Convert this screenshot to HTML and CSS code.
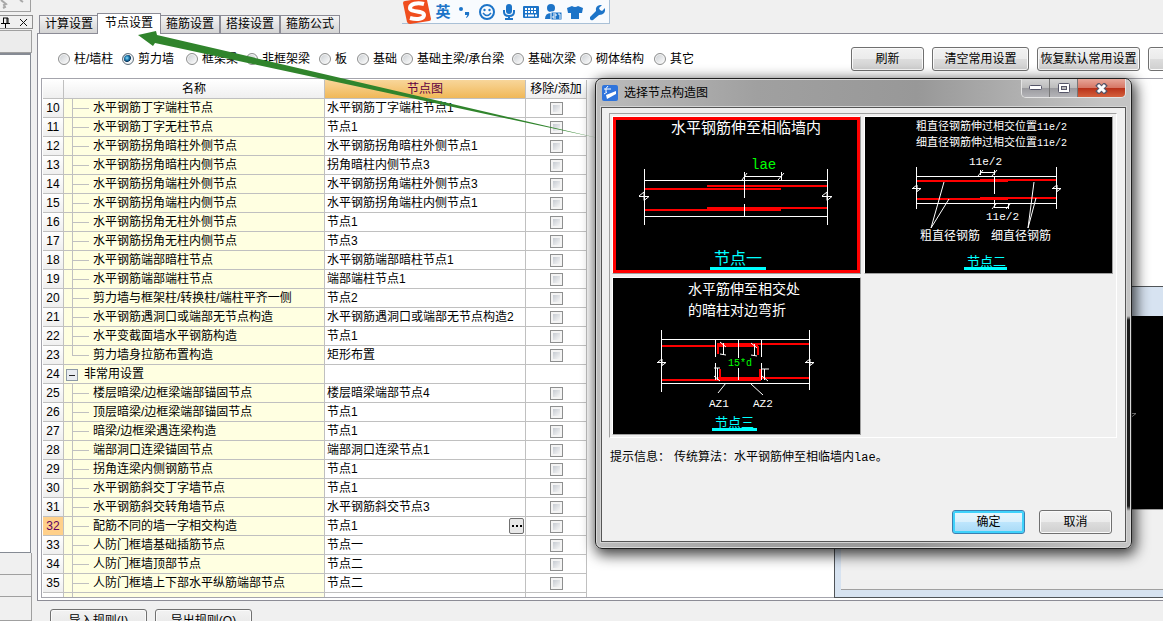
FILE: index.html
```html
<!DOCTYPE html>
<html lang="zh-CN">
<head>
<meta charset="utf-8">
<title>节点设置</title>
<link rel="stylesheet" href="styles.css">
</head>
<body>
<div class="app">
  <aside class="dock">
    <div class="dock-tools">
      <svg width="31" height="12" viewBox="0 0 31 12"><path d="M1 0l5 4-2 1 1 2-2 1M20 0l3 2" stroke="#a8a8a8" stroke-width="2" fill="none"/></svg>
    </div>
    <div class="dock-title">
      <button class="dock-btn" aria-label="固定"><svg width="9" height="11" viewBox="0 0 9 11"><path d="M2 1h5M2.500 1v5M6 1v5M7 1v5M0 6.500h9M4.500 7v4" stroke="#000" fill="none"/></svg></button>
      <button class="dock-btn" aria-label="关闭"><svg width="9" height="9" viewBox="0 0 9 9"><path d="M1 1l7 7M8 1L1 8" stroke="#111" fill="none"/></svg></button>
    </div>
    <div class="dock-head"></div>
    <div class="dock-tree"></div>
    <div class="dock-row"></div>
    <div class="dock-row"></div>
    <div class="dock-row"></div>
  </aside>

  <main class="main">
    <nav class="tabs" role="tablist">
      <button class="tab" role="tab">计算设置</button>
      <button class="tab tab-active" role="tab" aria-selected="true">节点设置</button>
      <button class="tab" role="tab">箍筋设置</button>
      <button class="tab" role="tab">搭接设置</button>
      <button class="tab" role="tab">箍筋公式</button>
    </nav>

    <section class="panel">
      <div class="filter">
        <div class="kinds">
          <label class="kind"><input type="radio" name="kind">柱/墙柱</label>
          <label class="kind"><input type="radio" name="kind" checked>剪力墙</label>
          <label class="kind"><input type="radio" name="kind">框架梁</label>
          <label class="kind"><input type="radio" name="kind">非框架梁</label>
          <label class="kind"><input type="radio" name="kind">板</label>
          <label class="kind"><input type="radio" name="kind">基础</label>
          <label class="kind"><input type="radio" name="kind">基础主梁/承台梁</label>
          <label class="kind"><input type="radio" name="kind">基础次梁</label>
          <label class="kind"><input type="radio" name="kind">砌体结构</label>
          <label class="kind"><input type="radio" name="kind">其它</label>
        </div>
        <div class="actions">
          <button class="btn btn-s">刷新</button>
          <button class="btn btn-m">清空常用设置</button>
          <button class="btn btn-l">恢复默认常用设置</button>
          <button class="btn btn-m" aria-label="更多"></button>
        </div>
      </div>

      <div class="sheet">
        <table class="grid">
          <colgroup><col class="c-no"><col class="c-name"><col class="c-node"><col class="c-tick"></colgroup>
          <thead><tr><th></th><th>名称</th><th class="current">节点图</th><th>移除/添加</th></tr></thead>
          <tbody>
            <tr><th>10</th><td class="name">水平钢筋丁字端柱节点</td><td>水平钢筋丁字端柱节点1</td><td class="tick"><input type="checkbox" aria-label="10"></td></tr>
            <tr><th>11</th><td class="name">水平钢筋丁字无柱节点</td><td>节点1</td><td class="tick"><input type="checkbox" aria-label="11"></td></tr>
            <tr><th>12</th><td class="name">水平钢筋拐角暗柱外侧节点</td><td>水平钢筋拐角暗柱外侧节点1</td><td class="tick"><input type="checkbox" aria-label="12"></td></tr>
            <tr><th>13</th><td class="name">水平钢筋拐角暗柱内侧节点</td><td>拐角暗柱内侧节点3</td><td class="tick"><input type="checkbox" aria-label="13"></td></tr>
            <tr><th>14</th><td class="name">水平钢筋拐角端柱外侧节点</td><td>水平钢筋拐角端柱外侧节点3</td><td class="tick"><input type="checkbox" aria-label="14"></td></tr>
            <tr><th>15</th><td class="name">水平钢筋拐角端柱内侧节点</td><td>水平钢筋拐角端柱内侧节点1</td><td class="tick"><input type="checkbox" aria-label="15"></td></tr>
            <tr><th>16</th><td class="name">水平钢筋拐角无柱外侧节点</td><td>节点1</td><td class="tick"><input type="checkbox" aria-label="16"></td></tr>
            <tr><th>17</th><td class="name">水平钢筋拐角无柱内侧节点</td><td>节点3</td><td class="tick"><input type="checkbox" aria-label="17"></td></tr>
            <tr><th>18</th><td class="name">水平钢筋端部暗柱节点</td><td>水平钢筋端部暗柱节点1</td><td class="tick"><input type="checkbox" aria-label="18"></td></tr>
            <tr><th>19</th><td class="name">水平钢筋端部端柱节点</td><td>端部端柱节点1</td><td class="tick"><input type="checkbox" aria-label="19"></td></tr>
            <tr><th>20</th><td class="name">剪力墙与框架柱/转换柱/端柱平齐一侧</td><td>节点2</td><td class="tick"><input type="checkbox" aria-label="20"></td></tr>
            <tr><th>21</th><td class="name">水平钢筋遇洞口或端部无节点构造</td><td>水平钢筋遇洞口或端部无节点构造2</td><td class="tick"><input type="checkbox" aria-label="21"></td></tr>
            <tr><th>22</th><td class="name">水平变截面墙水平钢筋构造</td><td>节点1</td><td class="tick"><input type="checkbox" aria-label="22"></td></tr>
            <tr><th>23</th><td class="name name-last">剪力墙身拉筋布置构造</td><td>矩形布置</td><td class="tick"><input type="checkbox" aria-label="23"></td></tr>
            <tr><th>24</th><td class="group"><button class="fold" aria-label="折叠"></button>非常用设置</td><td></td><td></td></tr>
            <tr><th>25</th><td class="name">楼层暗梁/边框梁端部锚固节点</td><td>楼层暗梁端部节点4</td><td class="tick"><input type="checkbox" aria-label="25"></td></tr>
            <tr><th>26</th><td class="name">顶层暗梁/边框梁端部锚固节点</td><td>节点1</td><td class="tick"><input type="checkbox" aria-label="26"></td></tr>
            <tr><th>27</th><td class="name">暗梁/边框梁遇连梁构造</td><td>节点1</td><td class="tick"><input type="checkbox" aria-label="27"></td></tr>
            <tr><th>28</th><td class="name">端部洞口连梁锚固节点</td><td>端部洞口连梁节点1</td><td class="tick"><input type="checkbox" aria-label="28"></td></tr>
            <tr><th>29</th><td class="name">拐角连梁内侧钢筋节点</td><td>节点1</td><td class="tick"><input type="checkbox" aria-label="29"></td></tr>
            <tr><th>30</th><td class="name">水平钢筋斜交丁字墙节点</td><td>节点1</td><td class="tick"><input type="checkbox" aria-label="30"></td></tr>
            <tr><th>31</th><td class="name">水平钢筋斜交转角墙节点</td><td>水平钢筋斜交节点3</td><td class="tick"><input type="checkbox" aria-label="31"></td></tr>
            <tr><th class="current">32</th><td class="name">配筋不同的墙一字相交构造</td><td><div class="picker">节点1<button class="more" aria-label="选择节点图"><svg width="10" height="2" viewBox="0 0 10 2"><path d="M0 0h2v2H0zM4 0h2v2H4zM8 0h2v2H8z"/></svg></button></div></td><td class="tick"><input type="checkbox" aria-label="32"></td></tr>
            <tr><th>33</th><td class="name">人防门框墙基础插筋节点</td><td>节点一</td><td class="tick"><input type="checkbox" aria-label="33"></td></tr>
            <tr><th>34</th><td class="name">人防门框墙顶部节点</td><td>节点二</td><td class="tick"><input type="checkbox" aria-label="34"></td></tr>
            <tr><th>35</th><td class="name">人防门框墙上下部水平纵筋端部节点</td><td>节点二</td><td class="tick"><input type="checkbox" aria-label="35"></td></tr>
            <tr><th></th><td class="name"></td><td></td><td></td></tr>
          </tbody>
        </table>
      </div>
    </section>

    <footer class="bottom">
      <button class="btn btn-m">导入规则(<u>I</u>)</button>
      <button class="btn btn-m">导出规则(<u>O</u>)</button>
    </footer>
  </main>
</div>

<!-- Input method bar -->
<div class="ime">
  <svg class="ime-logo" width="30" height="26" viewBox="0 0 30 26"><path d="M1 3Q1 1 3 1L22-2Q24-2 25 0L29 19Q29 21 27 21L8 24Q6 24 5 22Z" fill="#f04e1e"/><path d="M22 4C15 2 8 4 8 8c0 5 14 2 14 7 0 4-7 5-14 3" stroke="#fff" stroke-width="4" fill="none"/></svg>
  <button class="ime-btn">英</button>
  <button class="ime-btn" aria-label="标点"><svg width="18" height="18" viewBox="0 0 18 18"><circle cx="5" cy="6" r="2"/><path d="M9 9h4q1 4-3 6v-1q2-1 1-2H9z"/></svg></button>
  <button class="ime-btn" aria-label="表情"><svg width="18" height="18" viewBox="0 0 18 18"><circle cx="9" cy="9" r="7" fill="none" stroke="#1c74c8" stroke-width="2"/><circle cx="6.500" cy="7" r="1.200"/><circle cx="11.500" cy="7" r="1.200"/><path d="M5 10q4 5 8 0" fill="none" stroke="#1c74c8" stroke-width="1.500"/></svg></button>
  <button class="ime-btn" aria-label="语音"><svg width="18" height="18" viewBox="0 0 18 18"><rect x="6" y="1" width="6" height="10" rx="3"/><path d="M4 7v2q0 4 5 4t5-4V7M9 13v3M5 16h8" fill="none" stroke="#1c74c8" stroke-width="2"/></svg></button>
  <button class="ime-btn" aria-label="键盘"><svg width="18" height="18" viewBox="0 0 18 18"><rect x="1" y="3" width="16" height="12" rx="1"/><path d="M3 6h12M3 9h12" stroke="#fff" stroke-width="2" stroke-dasharray="2 1"/><path d="M3 12.500h2M6 12.500h6M13 12.500h2" stroke="#fff" stroke-width="2"/></svg></button>
  <button class="ime-btn" aria-label="账户"><svg width="20" height="18" viewBox="0 0 20 18"><circle cx="8" cy="5" r="4"/><path d="M2 16q0-6 6-6t7 6z"/><rect x="8" y="9" width="11" height="8" fill="#1c74c8" stroke="#fff"/><path d="M10 11h3v2h-3v2h3M15 11h2v5" fill="none" stroke="#fff"/></svg></button>
  <button class="ime-btn" aria-label="皮肤"><svg width="18" height="18" viewBox="0 0 18 18"><path d="M6 3q3 2 6 0l5 2-1 5h-3v6H5v-6H2L1 5z"/></svg></button>
  <button class="ime-btn" aria-label="工具"><svg width="18" height="18" viewBox="0 0 18 18"><path d="M2 14l6-6q-1-5 4-6l2 0-3 3 1 2 2 1 3-3q1 7-6 7l-6 5q-2 1-3-1z"/></svg></button>
</div>

<!-- Preview window behind the dialog -->
<section class="preview">
  <div class="preview-canvas"><svg width="6" height="5" viewBox="0 0 6 5"><path d="M0 .5h5L0 4.500" fill="none" stroke="#bbb"/></svg></div>
</section>

<svg class="pointer" width="600" height="140" viewBox="0 0 600 140"><path d="M138 35L156 31 157 35 598 138 155 43 153 46Z" fill="#30842c"/></svg>

<section class="dialog" role="dialog" aria-labelledby="dialog-title">
  <header class="caption">
    <svg width="16" height="16" viewBox="0 0 16 16"><rect width="16" height="16" rx="2" fill="#2f74dc"/><path d="M2 4h7M6 1q-3 2-2 6M2 9l3-2" stroke="#fff" fill="none"/><path d="M4 10l10-4v3L5 14z" fill="#fff"/></svg>
    <h1 class="caption-text" id="dialog-title">选择节点构造图</h1>
    <div class="winbtns">
      <button class="winbtn" aria-label="最小化"><svg width="13" height="6" viewBox="0 0 13 6"><rect x=".5" y=".5" width="12" height="4" rx="1" fill="#fff" stroke="#555568"/></svg></button>
      <button class="winbtn" aria-label="最大化"><svg width="12" height="10" viewBox="0 0 12 10"><rect x=".5" y=".5" width="11" height="9" rx="1" fill="#fff" stroke="#555568"/><rect x="3.500" y="3.500" width="5" height="3" fill="#bbb" stroke="#555568"/></svg></button>
      <button class="winbtn winbtn-close" aria-label="关闭"><svg width="13" height="11" viewBox="0 0 13 11"><path d="M2 1l9 9M11 1l-9 9" stroke="#555568" stroke-width="5"/><path d="M3 2l7 7M10 2L3 9" stroke="#fff" stroke-width="3"/></svg></button>
    </div>
  </header>
  <div class="dialog-body">
    <div class="cards">
      <button class="card" aria-label="节点一">
        <svg width="247" height="156" viewBox="0 0 247 156">
          <rect width="247" height="156" fill="#000"/>
          <rect x="1.500" y="1.500" width="244" height="153" fill="none" stroke="#f00" stroke-width="3"/>
          <text class="t15" x="58" y="16">水平钢筋伸至相临墙内</text>
          <text class="m14 green" x="138" y="52">lae</text>
          <path class="bar" d="M94 69H214M31 72H168M94 91H214M31 93H168"/>
          <path class="ln" d="M31.500 52V108M214.500 52V108M31 63.500H214M31 99.500H214M131.500 63V81M131.500 87V99M131 59.500H168M131.500 55V63M168.500 55V63M129 63l5-7M165 63l6-7M26 79.500H36l-5 4V75l-5 4M209 79.500H219l-5 4V75l-5 4"/>
          <text class="t16 cyan" x="101" y="147">节点一</text>
          <rect x="97" y="150" width="56" height="3" fill="#0ff"/>
        </svg>
      </button>
      <button class="card" aria-label="节点二">
        <svg width="247" height="156" viewBox="0 0 247 156">
          <rect width="247" height="156" fill="#000"/>
          <text class="t11" x="51" y="13">粗直径钢筋伸过相交位置<tspan class="m10">11e/2</tspan></text>
          <text class="t11" x="51" y="29">细直径钢筋伸过相交位置<tspan class="m10">11e/2</tspan></text>
          <text class="m11" x="104" y="48">11e/2</text>
          <path class="bar" d="M115 63H191M51 64H143M115 81H191M51 82H143"/>
          <path class="ln" d="M51.500 50V92M191.500 50V92M51 59.500H191M51 86.500H191M129.500 59V77M129.500 83V91M115 55.500H129M115.500 53V58M129.500 53V58M113 59l5-6M127 59l5-6M129 90.500H143M143.500 87V92M127 92l4-5M141 92l4-5M47 71.500H56l-4 3V68l-4 3M187 71.500H196l-4 3V68l-4 3M79 65L66 111 84 82M169 65L163 111 171 81"/>
          <text class="m11" x="121" y="103">11e/2</text>
          <text class="t12" x="55" y="123">粗直径钢筋</text>
          <text class="t12" x="126" y="123">细直径钢筋</text>
          <text class="t13 cyan" x="102" y="149">节点二</text>
          <rect x="99" y="150" width="43" height="3" fill="#0ff"/>
        </svg>
      </button>
      <button class="card" aria-label="节点三">
        <svg width="247" height="156" viewBox="0 0 247 156">
          <rect width="247" height="156" fill="#000"/>
          <text class="t14" x="75" y="16">水平筋伸至相交处</text>
          <text class="t14" x="75" y="37">的暗柱对边弯折</text>
          <path class="bar" d="M48 68H103M145 66H196M48 102H105M147 100H196M105 68V76M145 68V77M107 91V101M147 91V101"/>
          <path class="bar thick" d="M104 67H145M105 101H148"/>
          <path class="ln" d="M48.500 52V114M196.500 52V112M48 61.500H196M48 105.500H196M102.500 61V79M102.500 85V102M148.500 61V79M148.500 85V102M125.500 61V80M125.500 90V102M44 84.500H53l-4 3V81l-4 3M192 84.500H201l-4 3V81l-4 3M110.500 65V77M107 64l6 5M107 76l6 1M141.500 66V78M138 65l6 5M138 77l6 1M104.500 90V102M101 90h6M101 98l6 5M151.500 91V102M148 91h8M149 98l6 5M113 105L105 115M138 106L150 117"/>
          <text class="m10 green" x="115" y="88">15*d</text>
          <text class="m11" x="96" y="129">AZ1</text>
          <text class="m11" x="140" y="129">AZ2</text>
          <text class="t13 cyan" x="102" y="149">节点三</text>
          <rect x="99" y="150" width="45" height="3" fill="#0ff"/>
        </svg>
      </button>
    </div>
    <p class="hint"><span>提示信息：</span><span>传统算法：水平钢筋伸至相临墙内<span class="mono">lae</span>。</span></p>
    <div class="dialog-actions">
      <button class="btn btn-s btn-default">确定</button>
      <button class="btn btn-s">取消</button>
    </div>
  </div>
</section>
</body>
</html>
```
FILE: styles.css
```css
* { box-sizing: border-box; }

body {
  margin: 0;
  height: 100vh;
  overflow: hidden;
  position: relative;
  background: #f0f0f0;
  color: #000;
  font: 12px/18px "Liberation Sans", "Noto Sans CJK SC", sans-serif;
}

button { font: inherit; color: inherit; padding: 0; margin: 0; }
svg { display: block; }

.app { display: flex; height: 100vh; }

/* Left dock */
.dock { flex: none; width: 37px; padding-right: 4px; display: flex; flex-direction: column; }
.dock-tools { height: 12px; margin-right: 2px; border: solid #a0a0a0; border-width: 0 1px 1px 0; }
.dock-title {
  height: 14px; margin-top: 3px; display: flex; justify-content: space-between; align-items: center;
  padding: 0 4px 0 1px; border: 1px solid #909090; border-left: 0;
}
.dock-btn { border: 0; background: none; }
.dock-head { height: 23px; margin: 1px 1px 0 0; border: 1px solid #a0a0a0; border-left: 0; background: #ececec; }
.dock-tree { flex: 1; margin-right: 2px; background: #fff; border: solid #868b94; border-width: 2px 1px 1px 0; }
.dock-row { height: 22px; margin-right: 1px; border: solid #a0a0a0; border-width: 0 1px 1px 0; }
.dock-row:last-child { height: 24px; }

/* Main column */
.main { flex: 1; min-width: 0; display: flex; flex-direction: column; }
.tabs { flex: none; height: 33px; padding-left: 2px; display: flex; align-items: flex-end; }
.tab {
  width: 60px; height: 18px; line-height: 17px; border: 1px solid #8c8c96; border-bottom: 0;
  background: linear-gradient(#f4f4f4, #e4e4e4 50%, #d4d4d4);
}
.tab-active { width: 64px; height: 21px; margin: 0 -1px -1px -2px; background: #fff; position: relative; padding-bottom: 2px; }

.panel { flex: 1; min-height: 0; display: flex; flex-direction: column; background: #fff; border: solid #8c8c96; border-width: 1px 0 1px 1px; }
.filter { flex: none; height: 44px; display: flex; align-items: center; padding: 6px 0 0 20px; overflow: hidden; }
.kinds { flex: none; display: grid; grid-template-columns: 64px 64px 60px 73px 38px 44px 111px 68px 74px 197px; }
.kind { display: flex; align-items: center; gap: 4px; white-space: nowrap; }
.kind input {
  appearance: none; margin: 0; width: 12px; height: 12px; border-radius: 50%;
  border: 1px solid #8e8f8f; background: linear-gradient(135deg, #c8ccd0, #fff); box-shadow: inset 0 0 0 1px #f4f4f4;
}
.kind input:checked { background: radial-gradient(circle at 40% 40%, #8fdcf8 0, #1c7ab0 25%, #0c3a60 42%, #f0f4f8 50%); border-color: #61707c; }
.actions { display: flex; gap: 8px; }

.btn {
  flex: none; height: 24px; border: 1px solid #707070; border-radius: 3px; white-space: nowrap;
  background: linear-gradient(#f2f2f2, #ebebeb 50%, #dddddd 50%, #cfcfcf); box-shadow: inset 0 0 0 1px #fafafa;
}
.btn-s { width: 73px; }
.btn-m { width: 97px; }
.btn-l { width: 103px; }
.btn-default { border-color: #3c7fb1; background: linear-gradient(#eaf6fd, #d9f0fc 50%, #bee6fd 50%, #a7d9f5); box-shadow: inset 0 0 0 2px #3fd2fb; }

/* Settings table */
.sheet { flex: 1; min-height: 0; overflow: hidden; margin: 0 0 2px 3px; padding: 1px; border: solid #a4a4ac; border-width: 1px 0 1px 1px; }
.grid { table-layout: fixed; width: 544px; border-collapse: separate; border-spacing: 0; }
.c-no { width: 21px; }
.c-name { width: 261px; }
.c-node { width: 201px; }
.c-tick { width: 61px; }
.grid th, .grid td {
  height: 19px; padding: 0 0 0 2px; line-height: 18px; white-space: nowrap;
  border: solid #c0c0c0; border-width: 0 1px 1px 0; text-align: left; font-weight: normal;
}
.grid th { padding: 0; text-align: center; background: linear-gradient(#fff, #efefef); }
.grid thead .current { color: #600040; background: linear-gradient(#f8d69a, #f0b858); }
.grid tbody .current { color: #600060; background: #ffd08a; }
.grid td.name {
  padding-left: 29px;
  background:
    linear-gradient(#c0c0c0, #c0c0c0) 8px 0 / 1px 100% no-repeat,
    linear-gradient(#c0c0c0, #c0c0c0) 9px 9px / 16px 1px no-repeat,
    #ffffe1;
}
.grid td.name-last { background-size: 1px 10px, 16px 1px, auto; }
.grid td.group { background: #ffffe1; }
.fold {
  width: 12px; height: 12px; margin-right: 6px; vertical-align: -2px; border: 1px solid #8e9aa6;
  background: linear-gradient(#222, #222) center / 6px 1px no-repeat, #e8ecf0;
}
.grid td.tick { padding: 0; text-align: center; }
.tick input {
  appearance: none; display: block; width: 13px; height: 13px; margin: 0 auto; border: 1px solid #8e8f8f;
  background: linear-gradient(135deg, #c6cbd2, #f6f6f6) content-box, #f4f4f4; padding: 2px;
}
.picker { display: flex; justify-content: space-between; align-items: center; height: 18px; }
.more { width: 15px; height: 16px; margin-right: 1px; border: 1px solid #707070; border-radius: 2px; background: #e8e8e8; display: grid; place-items: center; }

.bottom { flex: none; height: 20px; overflow: hidden; display: flex; gap: 8px; padding: 8px 0 0 13px; }

/* Input method bar */
.ime {
  position: absolute; top: 0; left: 402px; height: 24px; display: flex; align-items: center; gap: 0;
  padding-right: 1px; border: solid #a9c0d6; border-width: 0 1px 1px 0;
  background: linear-gradient(90deg, transparent 14px, #f8fbfe 14px);
}
.ime-logo { flex: none; align-self: flex-start; }
.ime-btn { width: 22px; height: 23px; border: 0; background: none; display: grid; place-items: center; color: #1c74c8; font-size: 15px; font-weight: bold; }
.ime-btn svg { fill: #1c74c8; }

/* Preview window */
.preview {
  position: absolute; left: 834px; right: 0; top: 286px; bottom: 23px; padding: 29px 0 7px 6px;
  border: solid #505458; border-width: 1px 0 1px 1px; background: #d7e3f1;
}
.preview-canvas { height: 100%; border-bottom: 1px solid #a0a0a0; background: linear-gradient(#000 193px, #a0a0a0 193px, #a0a0a0 194px, #f0f0f0 194px); padding: 97px 0 0 290px; }

.pointer { position: absolute; left: 0; top: 0; pointer-events: none; }

/* Dialog */
.dialog {
  position: absolute; left: 595px; top: 78px; width: 537px; padding: 0 5px 6px; border: 1px solid #202020; border-radius: 7px;
  background:
    linear-gradient(transparent 237px, #1a1a1a 241px, #1a1a1a 427px, transparent 432px) right / 6px 100% no-repeat,
    linear-gradient(90deg, #bcbcbc, #a0a0a0 30%, #989898 60%, #c4c4c4 95%);
  box-shadow: inset 0 0 0 1px #d8d8d8, 2px 4px 14px 2px rgba(0, 0, 0, .75);
}
.caption { height: 28px; display: flex; align-items: center; gap: 6px; padding-left: 1px; }
.caption-text { flex: 1; margin: 0; font-size: 12px; font-weight: normal; }
.winbtns { align-self: flex-start; display: flex; border: 1px solid #e4e4e4; border-top: 0; border-radius: 0 0 5px 5px; overflow: hidden; }
.winbtn { width: 28px; height: 18px; border: 0; border-right: 1px solid #777; background: linear-gradient(#d4d4d4, #bcbcbc 50%, #9a9a9e 50%, #b4b4b8); display: grid; place-items: center; }
.winbtn-close { width: 47px; border-right: 0; background: linear-gradient(#e8a698, #d67664 50%, #b83018 50%, #d4603c); }
.dialog-body { border: 1px solid #555; padding: 5px 8px 7px 7px; background: #f0f0f0; box-shadow: 0 0 0 1px #d4d4d4; }
.cards {
  display: grid; grid-template-columns: repeat(2, 249px); gap: 3px; padding: 2px;
  border: 1px solid; border-color: #a0a0a0 #fff #fff #a0a0a0;
}
.card { border: 1px solid; border-color: #fff #a0a0a0 #a0a0a0 #fff; background: #000; }
.card text { fill: #fff; font-family: "Noto Sans CJK SC", sans-serif; }
.card .m10, .card .m11, .card .m14, .mono { font-family: "Liberation Mono", monospace; }
.m10 { font-size: 10px; }
.m11, .t11 { font-size: 11px; }
.t12 { font-size: 12px; }
.t13 { font-size: 13px; }
.m14, .t14 { font-size: 14px; }
.t15 { font-size: 15px; }
.t16 { font-size: 16px; }
.card .green { fill: #0f0; }
.card .cyan { fill: #0ff; }
.ln { fill: none; stroke: #fff; stroke-width: 1px; }
.bar { fill: none; stroke: #f00; stroke-width: 2px; }
.thick { stroke-width: 4px; }
.hint { margin: 10px 0 43px 1px; display: flex; gap: 4px; }
.dialog-actions { display: flex; justify-content: flex-end; gap: 14px; padding-right: 5px; }
```
